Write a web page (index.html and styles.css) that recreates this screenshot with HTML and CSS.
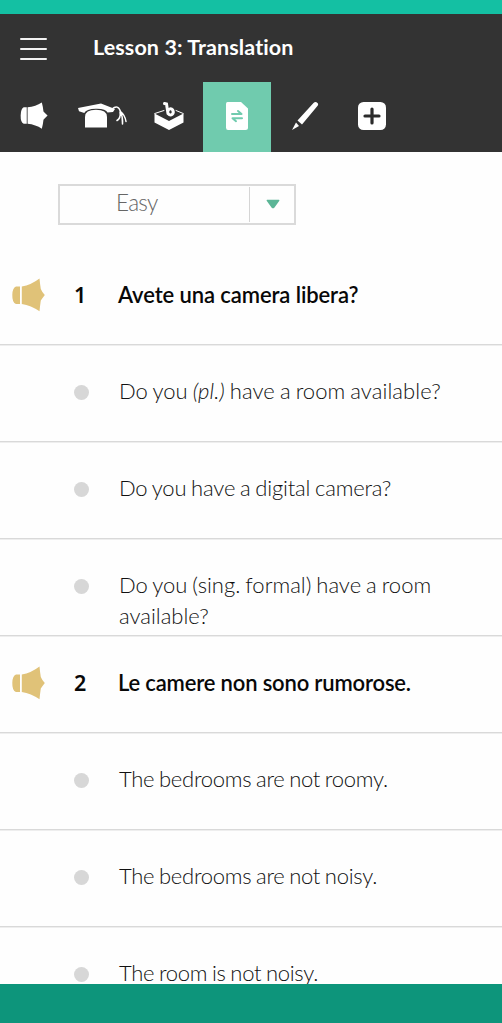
FILE: index.html
```html
<!DOCTYPE html>
<html lang="en">
<head>
<meta charset="utf-8">
<title>Lesson 3: Translation</title>
<link rel="stylesheet" href="styles.css">
</head>
<body>
<svg class="defs" width="0" height="0" aria-hidden="true">
  <symbol id="speaker" viewBox="0 0 34 34">
    <path d="M8 8.500H4Q.5 9.500 .3 17T4 26H8zM9.800 8.500Q19 7 27.500 .5Q28 6 28.800 11Q30 14 32.800 17Q30.500 20 28.800 22.500Q28 28 27.500 33.300Q19 27.500 9.800 26z"/>
  </symbol>
</svg>
<div class="app">
  <header class="header">
    <div class="titlebar">
      <div class="menu"><i></i><i></i><i></i></div>
      <h1 class="title">Lesson 3: Translation</h1>
    </div>
    <nav class="tabs">
      <a class="tab"><svg width="28" height="28" viewBox="0 0 34 34"><path d="M8.200 6.500H4.500Q1 8 .8 16.500T4.500 26.500H8.200zM9.200 6.500Q19 5.500 26.500 .5Q28 6 28.500 11.500Q31 14 33.500 16.500Q31 19 28.500 21.500Q28 27 26.500 32.500Q19 27.500 9.200 26.500z"/></svg></a>
      <a class="tab">
        <svg width="52" height="28" viewBox="0 0 52 28">
          <path d="M2 6L25 1.500 39 7 37 10 31.500 10.500Q30 6.500 20 6.700Q10 6.900 8.300 11L3 9.300z"/>
          <path d="M9 25.500V15Q9 7.800 20 7.800T31 15V25.500z"/>
          <path class="line" d="M36 7Q42 2 44.500 9.500Q49 13 50 19.500M44.500 9.500Q47 15 46.500 22M44 10Q45 16 41 18.500"/>
        </svg>
      </a>
      <a class="tab">
        <svg width="32" height="32" viewBox="0 0 32 32">
          <path d="M1.500 13.500L16 21 30.500 13.500V22.500L16 30 1.500 22.500z"/>
          <path class="thin" d="M1.800 13.500L11 10.500M23 10.500L30.200 13.500"/>
          <path class="stroke" d="M11.500 3.500L13.500 4 15 13.500C18 17 21.500 13.500 19.700 10C18.200 8 15.500 8.500 14.700 11.500"/>
        </svg>
      </a>
      <a class="tab active">
        <svg width="24" height="28" viewBox="0 0 24 28">
          <path d="M2.500 0H16L23 6.500V25.500Q23 28 20.500 28H3Q1 28 1 25.500V2Q1 0 2.500 0z"/>
          <path class="arrow" d="M7 12H16.500L13 9M17 16.200H7.500L11 19.200"/>
        </svg>
      </a>
      <a class="tab">
        <svg width="28" height="30" viewBox="0 0 28 30">
          <path d="M22.500 2Q24.500 0 26.500 2Q28 3.500 26 5.500L11 23.500 6.500 19.500zM5 21.500L8 25 1 29z"/>
        </svg>
      </a>
      <a class="tab">
        <svg width="30" height="30" viewBox="0 0 30 30">
          <rect x="1" y="1" width="28" height="28" rx="5.500"/>
          <path class="plus" d="M8 15H22M15 8V22"/>
        </svg>
      </a>
    </nav>
  </header>
  <main class="content">
    <div class="select">
      <span class="value">Easy</span>
      <span class="toggle"><svg width="14" height="10" viewBox="0 0 14 10"><path d="M1 .7H13Q14 1 13 2.300L8.300 8.700Q7 9.800 5.700 8.700L1 2.300Q0 1 1 .7z"/></svg></span>
    </div>
    <section class="row question">
      <svg class="sound" width="34" height="34"><use href="#speaker"/></svg>
      <span class="number">1</span><p class="text q1">Avete una camera libera?</p>
    </section>
    <div class="row"><i class="dot"></i><p class="text a1">Do you <em>(pl.)</em> have a room available?</p></div>
    <div class="row"><i class="dot"></i><p class="text a2">Do you have a digital camera?</p></div>
    <div class="row"><i class="dot"></i><p class="text a3">Do you (sing. formal) have a room available?</p></div>
    <section class="row question">
      <svg class="sound" width="34" height="34"><use href="#speaker"/></svg>
      <span class="number">2</span><p class="text q2">Le camere non sono rumorose.</p>
    </section>
    <div class="row"><i class="dot"></i><p class="text b1">The bedrooms are not roomy.</p></div>
    <div class="row"><i class="dot"></i><p class="text b2">The bedrooms are not noisy.</p></div>
    <div class="row last"><i class="dot"></i><p class="text b3">The room is not noisy.</p></div>
  </main>
  <footer class="footer"></footer>
</div>
</body>
</html>
```
FILE: styles.css
```css
* { box-sizing: border-box; }
body { margin: 0; background: #fefefe; font-family: Lato, "Open Sans", sans-serif; font-variant-ligatures: none; }
.defs { display: block; }
.app { display: flex; flex-direction: column; width: 502px; height: 1023px; overflow: hidden; }
.header { height: 152px; flex: none; background: #333; border-top: 14px solid #14c0a3; }
.titlebar { display: flex; align-items: center; height: 68px; padding: 0 0 2px 20px; }
.menu { display: flex; flex-direction: column; gap: 8px; width: 73px; padding-top: 3px; }
.menu i { width: 27px; height: 2px; background: #f3f3f3; border-radius: 1px; }
.title { margin: 0; color: #fff; font-size: 21.5px; font-weight: 700; line-height: 30px; letter-spacing: .1px; white-space: nowrap; }
.tabs { display: grid; grid-template-columns: 68px 67px 68px 68px 67px 68px; height: 70px; }
.tab { display: flex; align-items: center; justify-content: center; padding-bottom: 3px; fill: #fff; }
.active { background: #70cbae; }
.line, .thin, .stroke, .arrow, .plus { fill: none; stroke: #fff; stroke-width: 1.5; stroke-linecap: round; }
.thin { stroke-width: 1; }
.stroke { stroke-width: 3; }
.arrow { stroke: #70cbae; stroke-width: 2; stroke-linejoin: round; }
.plus { stroke: #2b2b2b; stroke-width: 3.2; }
.content { flex: none; height: 832px; overflow: hidden; padding-top: 32px; }
.select { display: flex; width: 238px; height: 41px; margin: 0 0 23px 58px; border: 2px solid #dadada; }
.value { width: 189px; padding-left: 56px; color: #666; font-weight: 300; font-size: 22.5px; letter-spacing: -.7px; line-height: 34px; }
.toggle { display: flex; flex: 1; align-items: center; justify-content: center; margin: 1px 0; padding: 0 0 1px 2px; border-left: 1px solid #d5d5d5; fill: #5bb596; }
.row { display: flex; height: 97px; padding: 30px 40px 0 74px; border-bottom: 1.5px solid #d9d9d9; color: #111; box-shadow: 0 1px #eee; }
.dot { flex: none; width: 15px; height: 15px; margin: 10px 30px 0 0; border-radius: 50%; background: #d7d7d7; }
.text { margin: 0; font-size: 22px; font-weight: 300; line-height: 31px; word-spacing: -1px; }
.question { padding: 31px 40px 0 12px; color: #080808; }
.question .text { font-weight: 600; word-spacing: 0; }
.sound { flex: none; margin: -1px 28px 0 0; fill: #e0c278; }
.number { width: 44px; font: 600 21.5px/31px "Noto Sans", sans-serif; }
.a1 { letter-spacing: .06px; }
.a2 { letter-spacing: -.18px; }
.a3 { letter-spacing: 0; }
.b1, .b2 { letter-spacing: -.27px; }
.b3 { letter-spacing: -.28px; }
.q1 { letter-spacing: -.1px; }
.q2 { letter-spacing: -.17px; }
.footer { flex: 1; background: #0d957b; }
```
